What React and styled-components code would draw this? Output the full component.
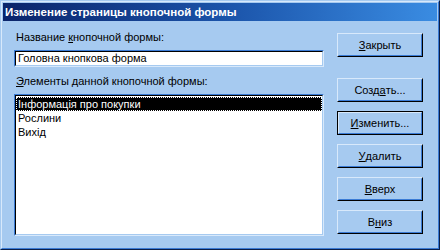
import React from "react";
import styled, { createGlobalStyle } from "styled-components";

const FACE = "#a6caf0";
const HI = "#d8e9fb";
const SH = "#3a7bd5";
const DK = "#0b1f4a";

const Global = createGlobalStyle`
  html, body { margin: 0; padding: 0; background: ${FACE}; }
  body { font-family: Tahoma, "Liberation Sans", Arial, sans-serif; font-size: 11px; }
`;

const Window = styled.div`
  width: 440px;
  height: 250px;
  box-sizing: border-box;
  background: ${FACE};
  border: 1px solid;
  border-color: ${FACE} ${DK} ${DK} ${FACE};
  display: flex;
  flex-direction: column;
`;

const Inner = styled.div`
  flex: 1;
  box-sizing: border-box;
  border: 1px solid;
  border-color: ${HI} ${SH} ${SH} ${HI};
  padding: 1px;
  display: flex;
  flex-direction: column;
`;

const TitleBar = styled.div`
  height: 18px;
  background: linear-gradient(to right, #0a246a 0%, #1a52a8 50%, #3a8ce2 100%);
  color: #fff;
  font-weight: bold;
  font-size: 11.5px;
  line-height: 18px;
  padding-left: 2px;
  white-space: nowrap;
  overflow: hidden;
`;

const Body = styled.div`
  flex: 1;
  display: flex;
  padding: 0 0 0 11px;
  gap: 13px;
`;

const LeftCol = styled.div`
  width: 310px;
  display: flex;
  flex-direction: column;
  padding-top: 10px;
`;

const Label = styled.div`
  height: 13px;
  line-height: 13px;
  padding-left: 2px;
  color: #000;
  margin-bottom: ${(p) => p.$mb || 0}px;
  white-space: nowrap;
`;

const Key = styled.span`
  text-decoration: underline;
  text-underline-offset: 1px;
`;

const Field = styled.div`
  height: 17px;
  box-sizing: border-box;
  border: 1px solid;
  border-color: ${SH} ${HI} ${HI} ${SH};
  margin-bottom: 8px;
`;

const FieldInner = styled.div`
  height: 100%;
  box-sizing: border-box;
  border: 1px solid;
  border-color: #000 ${FACE} ${FACE} #000;
  background: #fff;
  line-height: 13px;
  padding-left: 2px;
  white-space: nowrap;
`;

const List = styled.div`
  height: 142px;
  box-sizing: border-box;
  border: 1px solid;
  border-color: ${SH} ${HI} ${HI} ${SH};
`;

const ListInner = styled.div`
  height: 100%;
  box-sizing: border-box;
  border: 1px solid;
  border-color: #000 ${FACE} ${FACE} #000;
  background: #fff;
  padding-top: 1px;
`;

const Item = styled.div`
  height: 14px;
  line-height: 12px;
  box-sizing: border-box;
  padding-left: 1px;
  white-space: nowrap;
  color: ${(p) => (p.$sel ? "#fff" : "#000")};
  background: ${(p) => (p.$sel ? "#000" : "transparent")};
  border: 1px ${(p) => (p.$sel ? "dotted #fff" : "solid transparent")};
`;

const RightCol = styled.div`
  width: 86px;
  display: flex;
  flex-direction: column;
  padding-top: 12px;
  gap: 9px;
`;

const Button = styled.div`
  height: 24px;
  box-sizing: border-box;
  margin-bottom: ${(p) => p.$mb || 0}px;
  border: 1px solid;
  border-color: ${(p) => (p.$def ? "#000" : `${HI} #000 #000 ${HI}`)};
  display: flex;
`;

const ButtonInner = styled.div`
  flex: 1;
  box-sizing: border-box;
  border: 1px solid;
  border-color: ${(p) =>
    p.$def ? `${HI} ${SH} ${SH} ${HI}` : `${FACE} ${SH} ${SH} ${FACE}`};
  display: flex;
  align-items: center;
  justify-content: center;
  color: #000;
  white-space: nowrap;
`;

function Btn({ children, def, mb }) {
  return (
    <Button $def={def} $mb={mb}>
      <ButtonInner $def={def}>{children}</ButtonInner>
    </Button>
  );
}

export default function App() {
  return (
    <>
      <Global />
      <Window>
        <Inner>
          <TitleBar>Изменение страницы кнопочной формы</TitleBar>
          <Body>
            <LeftCol>
              <Label $mb={6}>
                Название <Key>к</Key>нопочной формы:
              </Label>
              <Field>
                <FieldInner>Головна кнопкова форма</FieldInner>
              </Field>
              <Label $mb={6}>
                <Key>Э</Key>лементы данной кнопочной формы:
              </Label>
              <List>
                <ListInner>
                  <Item $sel>Інформація про покупки</Item>
                  <Item>Рослини</Item>
                  <Item>Вихід</Item>
                </ListInner>
              </List>
            </LeftCol>
            <RightCol>
              <Btn mb={12}>
                <Key>З</Key>акрыть
              </Btn>
              <Btn>
                Созд<Key>а</Key>ть...
              </Btn>
              <Btn def>
                <Key>И</Key>зменить...
              </Btn>
              <Btn>
                <Key>У</Key>далить
              </Btn>
              <Btn>
                <Key>В</Key>верх
              </Btn>
              <Btn>
                В<Key>н</Key>из
              </Btn>
            </RightCol>
          </Body>
        </Inner>
      </Window>
    </>
  );
}
